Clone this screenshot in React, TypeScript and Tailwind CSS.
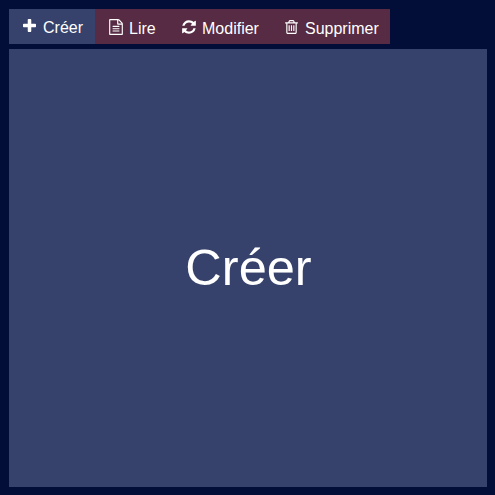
const label = "text-[16px] leading-[18px]";
const lowLabel = "mt-px text-[16px] leading-[18px]";

export default function App() {
  return (
    <main className="flex h-[495px] w-[495px] flex-col gap-[5px] overflow-hidden bg-[#020e37] px-[9px] pt-[9px] font-['Liberation_Sans',Arial,sans-serif] text-white">
      <nav className="flex h-[35px] w-[381px] items-start bg-[#562b43]">
        <button className="flex h-[35px] w-[86px] items-start bg-[#36426b] pt-[10px] pl-[14px]">
          <svg className="mr-[7px] h-[13px] w-[13px]" viewBox="0 0 1408 1408" fill="currentColor"><path d="M1408 608v192q0 40-28 68t-68 28H896v416q0 40-28 68t-68 28H608q-40 0-68-28t-28-68V896H96q-40 0-68-28T0 800V608q0-40 28-68t68-28h416V96q0-40 28-68t68-28h192q40 0 68 28t28 68v416h416q40 0 68 28t28 68z" /></svg>
          <span className={label}>Créer</span>
        </button>
        <button className="flex h-[35px] w-[73px] items-start pt-[10px] pl-[14px]">
          <svg className="mr-[6px] h-[16px] w-[14px]" viewBox="0 0 1536 1792" fill="currentColor"><path d="M1468 380q28 28 48 76t20 88v1152q0 40-28 68t-68 28H96q-40 0-68-28t-28-68V96q0-40 28-68T96 0h896q40 0 88 20t76 48zm-444-244v376h376q-10-29-22-41l-313-313q-12-12-41-22zm384 1528V640H992q-40 0-68-28t-28-68V128H128v1536zM384 800q0-14 9-23t23-9h704q14 0 23 9t9 23v64q0 14-9 23t-23 9H416q-14 0-23-9t-9-23zm736 224q14 0 23 9t9 23v64q0 14-9 23t-23 9H416q-14 0-23-9t-9-23v-64q0-14 9-23t23-9zm0 256q14 0 23 9t9 23v64q0 14-9 23t-23 9H416q-14 0-23-9t-9-23v-64q0-14 9-23t23-9z" /></svg>
          <span className={lowLabel}>Lire</span>
        </button>
        <button className="flex h-[35px] w-[102px] items-start pt-[10px] pl-[14px]">
          <svg className="mr-[6px] h-[16px] w-[14px]" viewBox="0 0 1536 1792" fill="currentColor"><path d="M1511 1056q0 5-1 7-64 268-268 434.500T764 1664q-146 0-282.500-55T238 1452l-129 129q-19 19-45 19t-45-19-19-45v-448q0-26 19-45t45-19h448q26 0 45 19t19 45-19 45l-137 137q71 66 161 102t187 36q134 0 250-65t186-179q11-17 53-117 8-23 30-23h192q13 0 22.500 9.500t9.500 22.500zm25-800v448q0 26-19 45t-45 19h-448q-26 0-45-19t-19-45 19-45l138-138Q969 384 768 384q-134 0-250 65T332 628q-11 17-53 117-8 23-30 23H50q-13 0-22.500-9.500T18 736v-7q65-268 270-434.500T768 128q146 0 284 55.500T1297 340l130-129q19-19 45-19t45 19 19 45z" /></svg>
          <span className={lowLabel}>Modifier</span>
        </button>
        <button className="flex h-[35px] w-[120px] items-start pt-[10px] pl-[15px]">
          <svg className="mt-px mr-[7px] h-[14px] w-[13px]" viewBox="0 0 1408 1536" fill="currentColor"><path d="M512 608v576q0 14-9 23t-23 9h-64q-14 0-23-9t-9-23V608q0-14 9-23t23-9h64q14 0 23 9t9 23zm256 0v576q0 14-9 23t-23 9h-64q-14 0-23-9t-9-23V608q0-14 9-23t23-9h64q14 0 23 9t9 23zm256 0v576q0 14-9 23t-23 9h-64q-14 0-23-9t-9-23V608q0-14 9-23t23-9h64q14 0 23 9t9 23zm128 724V384H256v948q0 22 7 40.500t14.500 27 10.500 8.500h832q3 0 10.500-8.500t14.500-27 7-40.500zM480 256h448l-48-117q-7-9-17-11H546q-10 2-17 11zm928 32v64q0 14-9 23t-23 9h-96v948q0 83-47 143.500t-113 60.500H288q-66 0-113-58.500T128 1336V384H32q-14 0-23-9t-9-23v-64q0-14 9-23t23-9h309l70-167q15-37 54-63t79-26h320q40 0 79 26t54 63l70 167h309q14 0 23 9t9 23z" /></svg>
          <span className={lowLabel}>Supprimer</span>
        </button>
      </nav>
      <section className="flex h-[438px] w-[478px] items-center justify-center bg-[#36426b]">
        <h1 className="mt-px ml-[1px] text-[50.500px] leading-none">Créer</h1>
      </section>
    </main>
  );
}
